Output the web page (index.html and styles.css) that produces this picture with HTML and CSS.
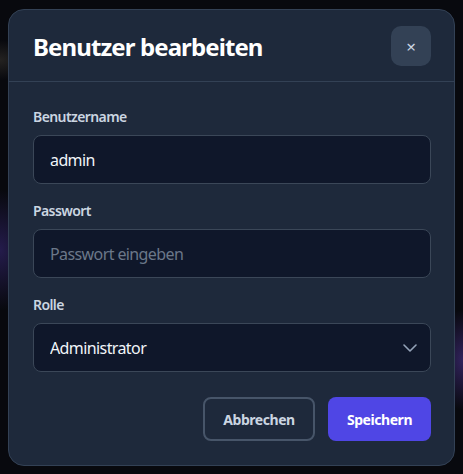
FILE: index.html
```html
<!DOCTYPE html>
<html lang="de">
<head>
    <meta charset="UTF-8">
    <meta name="viewport" content="width=device-width, initial-scale=1.0">
    <title>Benutzer bearbeiten</title>
    <link rel="stylesheet" href="styles.css">
</head>
<body>
    <!-- Dialog: Benutzer bearbeiten -->
    <div class="modal">
        <div class="modal-header">
            <h2>Benutzer bearbeiten</h2>
            <button class="close-btn" type="button">&times;</button>
        </div>

        <form class="modal-body">
            <div class="form-group">
                <label for="username">Benutzername</label>
                <input type="text" id="username" class="field" value="admin" />
            </div>

            <div class="form-group">
                <label for="password">Passwort</label>
                <input type="password" id="password" class="field" placeholder="Passwort eingeben" />
            </div>

            <div class="form-group">
                <label for="role">Rolle</label>
                <div class="select-wrap">
                    <select id="role" class="field">
                        <option value="admin">Administrator</option>
                        <option value="user">Benutzer</option>
                    </select>
                    <svg class="chevron" width="14" height="8" viewBox="0 0 14 8">
                        <path d="M1 1l6 6 6-6" fill="none" stroke="#94a3b8" stroke-width="1.6" stroke-linecap="round" stroke-linejoin="round"/>
                    </svg>
                </div>
            </div>

            <div class="actions">
                <button type="button" class="btn btn-secondary">Abbrechen</button>
                <button type="submit" class="btn btn-primary">Speichern</button>
            </div>
        </form>
    </div>
</body>
</html>
```

FILE: styles.css
```css
body {
    margin: 0;
    padding: 9px 8px;
    font-family: "Noto Sans", "Open Sans", sans-serif;
    background-color: #08090e;
    background-image:
        radial-gradient(ellipse 40px 60px at 0px 250px, rgba(70, 50, 150, 0.45), transparent),
        radial-gradient(ellipse 30px 50px at 463px 360px, rgba(90, 60, 170, 0.5), transparent),
        radial-gradient(ellipse 30px 20px at 0px 60px, rgba(120, 110, 90, 0.25), transparent);
    height: 474px;
    box-sizing: border-box;
}
.modal {
    background: #1e293b;
    border: 1px solid #334155;
    border-radius: 16px;
    box-sizing: border-box;
    width: 447px;
    height: 457px;
    overflow: hidden;
}
.modal-header {
    display: flex;
    justify-content: space-between;
    align-items: center;
    padding: 16px 23px 15px 24px;
    border-bottom: 1px solid #334155;
}
.modal-header h2 {
    margin: 0;
    color: #ffffff;
    font-size: 24px;
    font-weight: 700;
    letter-spacing: -0.9px;
}
.close-btn {
    width: 40px;
    height: 40px;
    border: none;
    border-radius: 10px;
    background: #334155;
    color: #cbd5e1;
    font-size: 17px;
    line-height: 1;
    font-family: inherit;
    cursor: pointer;
}
.modal-body {
    padding: 24px 23px 0 24px;
}
.form-group {
    margin-bottom: 16px;
}
.form-group label {
    display: block;
    margin-bottom: 8px;
    color: #cbd5e1;
    font-size: 14px;
    font-weight: 600;
    line-height: 21px;
    letter-spacing: -0.6px;
}
.field {
    display: block;
    width: 100%;
    height: 49px;
    box-sizing: border-box;
    padding: 0 16px;
    background: #0f172a;
    border: 1px solid #3b4758;
    border-radius: 8px;
    color: #f1f5f9;
    font-family: inherit;
    font-size: 16px;
    letter-spacing: -0.6px;
    outline: none;
}
.field::placeholder {
    color: #6b7789;
}
.select-wrap {
    position: relative;
}
select.field {
    appearance: none;
}
.chevron {
    position: absolute;
    right: 14px;
    top: 21px;
}
.actions {
    display: flex;
    justify-content: flex-end;
    gap: 13px;
    margin-top: 25px;
}
.btn {
    height: 44px;
    padding: 0 10px;
    border-radius: 8px;
    font-family: inherit;
    font-size: 14px;
    font-weight: 700;
    cursor: pointer;
    letter-spacing: -0.45px;
}
.btn-secondary {
    background: transparent;
    border: 2px solid #475569;
    color: #cbd5e1;
    width: 112px;
}
.btn-primary {
    background: #4f46e5;
    border: none;
    color: #ffffff;
    width: 103px;
}
```
